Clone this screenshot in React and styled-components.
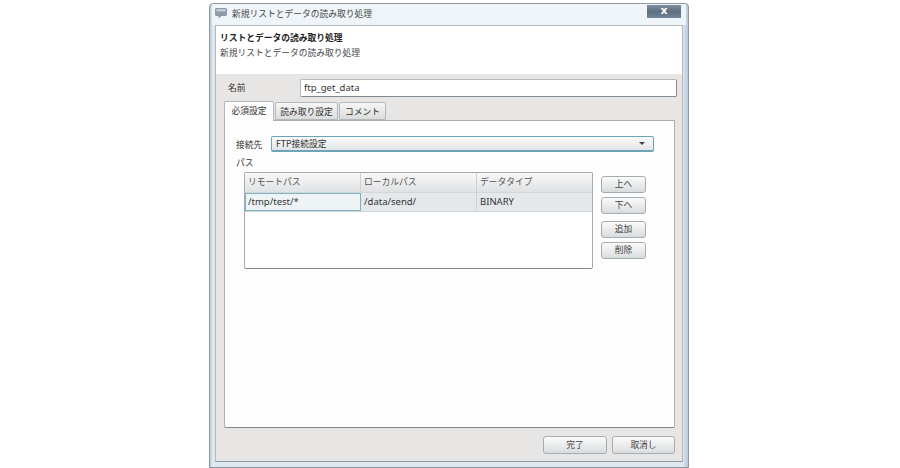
import React from "react";
import styled, { createGlobalStyle } from "styled-components";

const Global = createGlobalStyle`
  html, body { margin: 0; padding: 0; background: #fff; width: 900px; height: 468px; overflow: hidden; }
  * { box-sizing: border-box; }
  body { font-family: "Noto Sans CJK JP", "DejaVu Sans", sans-serif; color: #333; }
`;

const Page = styled.div`
  padding: 3px 0 0 209px;
`;

const Win = styled.div`
  width: 480px;
  height: 465px;
  background: linear-gradient(90deg, #b9cad8 0, #e3ecf3 3px, #dfe8ef 5px, #dfe8ef calc(100% - 5px), #c9d8e4 calc(100% - 3px), #b9cad8 100%);
  border: 1px solid #8f979e;
  border-radius: 4px 4px 0 0;
  display: flex;
  flex-direction: column;
  padding: 0 5px 5px 5px;
`;

const TitleBar = styled.div`
  height: 21px;
  flex: none;
  margin: 0 -3px;
  padding: 0 5px 2px 3px;
  background: #eff4f8;
  display: flex;
  align-items: center;
  font-size: 8.75px;
  color: #444;
`;

const TitleText = styled.span`
  margin-left: 5px;
  flex: 1;
`;

const CloseBtn = styled.div`
  width: 34px;
  height: 13px;
  margin-top: -5px;
  background: linear-gradient(180deg, #7c8c9b, #5c6e7f 55%, #75889a);
  color: #fff;
  font: bold 11px/12px "DejaVu Sans", sans-serif;
  text-align: center;
`;

const Inner = styled.div`
  flex: 1;
  display: flex;
  flex-direction: column;
  border: 1px solid #b2b8bd;
  border-bottom-color: #8f979e;
  background: #e8e5e5;
`;

const Header = styled.div`
  height: 48px;
  flex: none;
  background: #fff;
  padding: 4px 4px 0;
  font-size: 8.75px;
  line-height: 15px;
`;

const HeaderTitle = styled.div`
  font-weight: 700;
  color: #222;
`;

const HeaderSub = styled.div`
  color: #444;
`;

const Body = styled.div`
  flex: 1;
  display: flex;
  flex-direction: column;
  padding: 5px 5px 7px 8px;
`;

const NameRow = styled.div`
  display: flex;
  align-items: center;
  height: 18px;
  font-size: 8.75px;
`;

const NameLabel = styled.label`
  width: 76px;
  padding: 0 0 2px 4px;
`;

const NameInput = styled.div`
  flex: 1;
  height: 18px;
  background: #fff;
  border: 1px solid #b5babd;
  border-right-color: #7f8a92;
  border-bottom-color: #7f8a92;
  border-radius: 2px;
  padding-left: 3px;
  font: 9.5px/16px "Noto Sans", "DejaVu Sans", sans-serif;
`;

const Tabs = styled.div`
  display: flex;
  margin-top: 4px;
  height: 20px;
  flex: none;
  position: relative;
  z-index: 1;
`;

const Tab = styled.div`
  height: ${p => (p.$active ? "20px" : "18px")};
  margin-top: ${p => (p.$active ? "0" : "1px")};
  width: ${p => p.$w}px;
  text-align: center;
  font-size: 8.75px;
  line-height: 17px;
  background: ${p => (p.$active ? "#fdfdfd" : "linear-gradient(180deg, #f6f6f6, #dcdcdc)")};
  border: 1px solid #b3b8bb;
  border-bottom: ${p => (p.$active ? "none" : "1px solid #b3b8bb")};
  border-radius: 2px 2px 0 0;
  margin-right: 1px;
`;

const Panel = styled.div`
  flex: 1;
  width: 451px;
  margin-top: -1px;
  background: #fdfdfd;
  border: 1px solid #a9afb3;
  border-bottom-color: #80888e;
  border-radius: 0 0 2px 2px;
  padding: 15px 20px 0 11px;
  font-size: 8.75px;
`;

const SelectRow = styled.div`
  display: flex;
  align-items: center;
  height: 16px;
`;

const SelectLabel = styled.label`
  width: 35px;
  flex: none;
`;

const Select = styled.div`
  flex: 1;
  height: 16px;
  border: 1px solid #6fa3b8;
  border-bottom-width: 2px;
  border-radius: 2px;
  background: linear-gradient(180deg, #fafbfb, #e2e5e7);
  display: flex;
  align-items: center;
  justify-content: space-between;
  padding: 0 8px 0 4px;
  line-height: 14px;
`;

const Arrow = styled.span`
  width: 0;
  height: 0;
  border-left: 3px solid transparent;
  border-right: 3px solid transparent;
  border-top: 3px solid #444;
`;

const PathLabel = styled.div`
  line-height: 14px;
  margin-top: 4px;
`;

const TableArea = styled.div`
  display: flex;
  margin: 2px 0 0 8px;
`;

const Table = styled.div`
  width: 349px;
  height: 97px;
  border: 1px solid #a5acb1;
  border-bottom-color: #848c92;
  border-radius: 2px;
  background: #fff;
`;

const Row = styled.div`
  display: grid;
  grid-template-columns: 116px 116px 1fr;
  height: ${p => (p.$head ? "20px" : "19px")};
  background: ${p => (p.$head ? "linear-gradient(180deg, #f8f8f8, #dfe1e3)" : "#e4e8eb")};
  border-bottom: 1px solid #d4d7d9;
  color: ${p => (p.$head ? "#555" : "#333")};
`;

const Cell = styled.div`
  padding-left: 3px;
  border-right: 1px solid #cdd1d4;
  line-height: 17px;
  font-family: ${p => (p.$latin ? '"Noto Sans", "DejaVu Sans", sans-serif' : "inherit")};
  font-size: ${p => (p.$latin ? "9.5px" : "8.75px")};
  &:last-child { border-right: none; }
`;

const SelectedCell = styled(Cell)`
  background: #eef3f6;
  border: 1px solid #7fb0c4;
  padding-left: 2px;
  line-height: 16px;
`;

const SideButtons = styled.div`
  display: flex;
  flex-direction: column;
  margin: 4px 0 0 8px;
`;

const Btn = styled.button`
  width: ${p => p.$w || 45}px;
  height: ${p => p.$h || 17}px;
  margin: 0 0 ${p => p.$gap || 0}px 0;
  padding: 0;
  border: 1px solid #a6adb2;
  border-radius: 3px;
  background: linear-gradient(180deg, #fbfbfb, #d9dcde);
  font: 8.75px/1 "Noto Sans CJK JP", sans-serif;
  color: #444;
  text-align: center;
`;

const Footer = styled.div`
  display: flex;
  justify-content: flex-end;
  gap: 5px;
  margin: 8px 2px 0 0;
  flex: none;
`;

const Bubble = () => (
  <svg width="12" height="11" viewBox="0 0 12 11">
    <path d="M1.5 0h9A1.5 1.5 0 0 1 12 1.5v5A1.5 1.5 0 0 1 10.5 8H6.5L3.5 10.5V8h-2A1.5 1.5 0 0 1 0 6.5v-5A1.5 1.5 0 0 1 1.5 0z" fill="#8d9aa5" />
    <path d="M1.5 1h9v2.5h-9z" fill="#c3ccd3" />
  </svg>
);

export default function App() {
  return (
    <Page>
      <Global />
      <Win>
        <TitleBar>
          <Bubble />
          <TitleText>新規リストとデータの読み取り処理</TitleText>
          <CloseBtn>x</CloseBtn>
        </TitleBar>
        <Inner>
          <Header>
            <HeaderTitle>リストとデータの読み取り処理</HeaderTitle>
            <HeaderSub>新規リストとデータの読み取り処理</HeaderSub>
          </Header>
          <Body>
            <NameRow>
              <NameLabel>名前</NameLabel>
              <NameInput>ftp_get_data</NameInput>
            </NameRow>
            <Tabs>
              <Tab $active $w={50}>必須設定</Tab>
              <Tab $w={63}>読み取り設定</Tab>
              <Tab $w={47}>コメント</Tab>
            </Tabs>
            <Panel>
              <SelectRow>
                <SelectLabel>接続先</SelectLabel>
                <Select>FTP接続設定<Arrow /></Select>
              </SelectRow>
              <PathLabel>パス</PathLabel>
              <TableArea>
                <Table>
                  <Row $head>
                    <Cell>リモートパス</Cell>
                    <Cell>ローカルパス</Cell>
                    <Cell>データタイプ</Cell>
                  </Row>
                  <Row>
                    <SelectedCell $latin>/tmp/test/*</SelectedCell>
                    <Cell $latin>/data/send/</Cell>
                    <Cell $latin>BINARY</Cell>
                  </Row>
                </Table>
                <SideButtons>
                  <Btn $gap={4}>上へ</Btn>
                  <Btn $gap={7}>下へ</Btn>
                  <Btn $gap={4}>追加</Btn>
                  <Btn>削除</Btn>
                </SideButtons>
              </TableArea>
            </Panel>
            <Footer>
              <Btn $w={64} $h={18}>完了</Btn>
              <Btn $w={63} $h={18}>取消し</Btn>
            </Footer>
          </Body>
        </Inner>
      </Win>
    </Page>
  );
}
